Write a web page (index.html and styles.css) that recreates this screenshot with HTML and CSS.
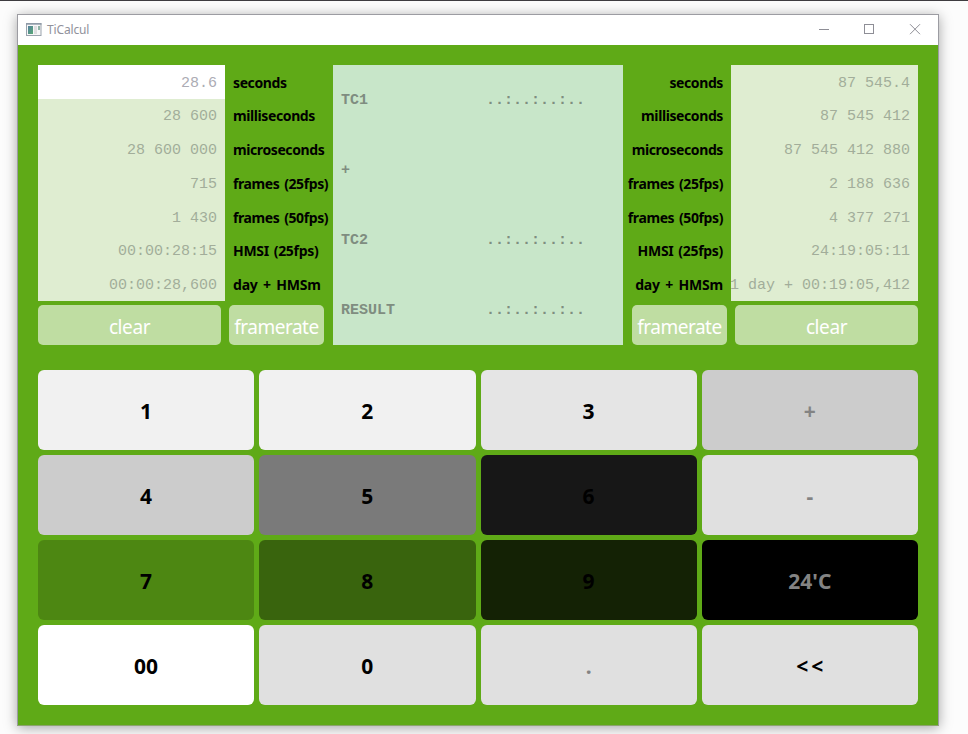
FILE: index.html
```html
<!DOCTYPE html>
<html lang="en">
<head>
<meta charset="utf-8">
<title>TiCalcul</title>
<link rel="stylesheet" href="styles.css">
</head>
<body>
<main class="window">
  <header class="titlebar">
    <svg class="app-icon" width="16" height="14" viewBox="0 0 16 14">
      <defs><linearGradient id="g" x1="0" y1="0" x2="1" y2="1"><stop offset="0" stop-color="#5581a0"/><stop offset="1" stop-color="#58a874"/></linearGradient></defs>
      <rect x=".5" y=".5" width="14.5" height="12" fill="#f7f7f8" stroke="#9aa3ad"/>
      <path d="M0 1h15.5" stroke="#8d98a6" stroke-width="1.4"/>
      <rect x="2" y="3" width="5" height="8" fill="url(#g)"/>
      <rect x="8" y="3" width="3" height="8" fill="#dedee0"/>
      <rect x="12" y="3" width="2" height="4" fill="#8fb3a6"/>
    </svg>
    <h1 class="title">TiCalcul</h1>
    <svg class="controls" width="102" height="12" viewBox="0 0 102 12" fill="none" stroke="#8e8e96">
      <path d="M0 5.500h10"/>
      <rect x="45.500" y=".5" width="9" height="9"/>
      <path d="M91 .2l10 10M101 .2l-10 10"/>
    </svg>
  </header>
  <section class="body">
    <div class="top">
      <section class="side">
        <div class="table">
          <div class="values">
            <div class="value active">28.6</div><div class="value">28 600</div><div class="value">28 600 000</div><div class="value">715</div><div class="value">1 430</div><div class="value">00:00:28:15</div><div class="value">00:00:28,600</div>
          </div>
          <div class="labels">
            <div class="label">seconds</div><div class="label">milliseconds</div><div class="label">microseconds</div><div class="label">frames (25fps)</div><div class="label">frames (50fps)</div><div class="label hmsi">HMSI (25fps)</div><div class="label plus">day + HMSm</div>
          </div>
        </div>
        <div class="actions"><button class="action clear">clear</button><button class="action rate">framerate</button></div>
      </section>
      <section class="timecode">
        <div class="tc"><span>TC1</span><span>..:..:..:..</span></div>
        <div class="tc"><span>+</span></div>
        <div class="tc"><span>TC2</span><span>..:..:..:..</span></div>
        <div class="tc"><span>RESULT</span><span>..:..:..:..</span></div>
      </section>
      <section class="side right">
        <div class="table">
          <div class="labels">
            <div class="label">seconds</div><div class="label">milliseconds</div><div class="label">microseconds</div><div class="label">frames (25fps)</div><div class="label">frames (50fps)</div><div class="label hmsi">HMSI (25fps)</div><div class="label plus">day + HMSm</div>
          </div>
          <div class="values">
            <div class="value">87 545.4</div><div class="value">87 545 412</div><div class="value">87 545 412 880</div><div class="value">2 188 636</div><div class="value">4 377 271</div><div class="value">24:19:05:11</div><div class="value">1 day + 00:19:05,412</div>
          </div>
        </div>
        <div class="actions"><button class="action rate">framerate</button><button class="action clear">clear</button></div>
      </section>
    </div>
    <section class="keypad">
      <button class="key light">1</button><button class="key light">2</button><button class="key soft">3</button><button class="key silver disabled">+</button>
      <button class="key silver">4</button><button class="key gray">5</button><button class="key charcoal">6</button><button class="key disabled">-</button>
      <button class="key green">7</button><button class="key forest">8</button><button class="key deep">9</button><button class="key black disabled">24'C</button>
      <button class="key white">00</button><button class="key">0</button><button class="key disabled">.</button><button class="key back">&lt;&lt;</button>
    </section>
  </section>
</main>
</body>
</html>
```
FILE: styles.css
```css
* { box-sizing: border-box; }
body {
  margin: 0;
  height: 734px;
  padding: 13px 0 0 17px;
  border-top: 1px solid #3e3c40;
  background: #fcfcfc;
  overflow: hidden;
  font-family: "Noto Sans", "Open Sans", sans-serif;
}
button { border: 0; padding: 0; font-family: inherit; }
.window {
  width: 922px;
  height: 712px;
  border: 1px solid #9c9ca2;
  border-bottom-color: #8ba46c;
  background: #5faa17;
  box-shadow: 0 2px 12px rgba(0, 0, 0, .35);
}
.titlebar {
  height: 30px;
  display: flex;
  align-items: center;
  padding: 0 17px 0 8px;
  background: #fff;
}
.title {
  margin: 0 auto 0 5px;
  font-size: 12px;
  font-weight: 400;
  line-height: 30px;
  letter-spacing: -.15px;
  color: #91919b;
}
.body { padding: 20px; }
.top { display: flex; height: 280px; }
.side { width: 295px; display: flex; flex-direction: column; gap: 4px; }
.table { height: 236px; display: flex; }
.values {
  width: 187px;
  display: grid;
  grid-template-columns: 187px;
  grid-template-rows: repeat(7, 1fr);
  background: #dfedd1;
  overflow: hidden;
}
.value {
  display: flex;
  align-items: center;
  justify-content: flex-end;
  padding: 2.600px 8px 0 0;
  font: 15px "Liberation Mono", monospace;
  white-space: pre;
  color: #a2ad9a;
}
.active { background: #fff; color: #acacb4; }
.labels { width: 108px; display: grid; grid-template-rows: repeat(7, 1fr); }
.label {
  display: flex;
  align-items: center;
  padding: 1.700px 0 0 8px;
  font-size: 14px;
  font-weight: 700;
  line-height: 20px;
  letter-spacing: -.4px;
  word-spacing: 1.5px;
  white-space: pre;
  color: #000;
}
.hmsi { letter-spacing: -.3px; word-spacing: 1.500px; }
.plus { letter-spacing: -.2px; word-spacing: 2px; }
.right .label { justify-content: flex-end; padding: 1.700px 8px 0 0; }
.actions { display: flex; gap: 8px; }
.action {
  height: 40px;
  border-radius: 5px;
  background: #bfdda2;
  color: #fff;
  font-size: 19px;
  line-height: 40px;
  letter-spacing: -.4px;
  padding-top: 2px;
}
.clear { width: 183px; }
.rate { width: 95px; letter-spacing: -.5px; }
.right .actions { justify-content: flex-end; }
.timecode { width: 290px; display: grid; grid-template-rows: repeat(4, 70px); background: #c8e6c9; }
.right .table { justify-content: flex-end; }
.tc {
  display: grid;
  grid-template-columns: 145px 1fr;
  align-items: center;
  padding-left: 8px;
  font: 700 15px "Liberation Mono", monospace;
  color: #7f8d80;
}
.keypad {
  margin-top: 25px;
  display: grid;
  grid-template-columns: repeat(4, 1fr);
  grid-auto-rows: 80px;
  gap: 5px;
}
.key {
  border-radius: 6px;
  background: #e0e0e0;
  color: #000;
  font-size: 21px;
  font-weight: 700;
  line-height: 80px;
  padding-top: 1px;
}
.light { background: #f1f1f1; }
.soft { background: #e5e5e5; }
.silver { background: #ccc; }
.gray { background: #7a7a7a; }
.charcoal { background: #171717; }
.green { background: #4d8712; }
.forest { background: #39640d; }
.deep { background: #142205; }
.black { background: #000; }
.white { background: #fff; }
.disabled { color: #838383; }
.back { letter-spacing: 3px; padding-left: 3px; }
```
